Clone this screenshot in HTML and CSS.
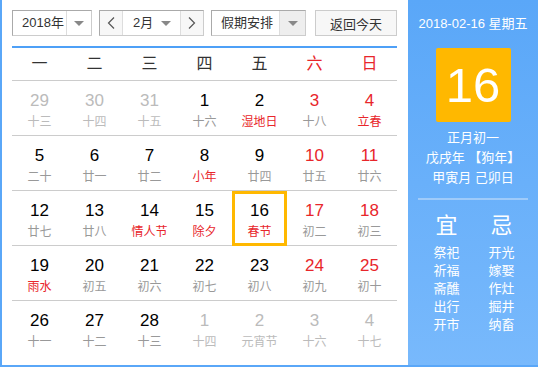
FILE: index.html
```html
<!DOCTYPE html>
<html>
<head>
    <title>万年历</title>
    <meta charset="UTF-8">
    <link rel="stylesheet" href="styles.css">
</head>
<body>

<div class="calendar">
    <div class="main">
        <div class="toolbar">
            <div class="select year-select">
                <span class="select-text">2018年</span>
                <span class="select-arrow"><i class="tri"></i></span>
            </div>
            <div class="month-group">
                <span class="nav-btn">
                    <svg width="8" height="12" viewBox="0 0 8 12"><polyline points="7,0.5 1.5,6 7,11.5" fill="none" stroke="#555" stroke-width="1.2"/></svg>
                </span>
                <div class="month-select">
                    <span class="select-text">2月</span>
                    <i class="tri"></i>
                </div>
                <span class="nav-btn">
                    <svg width="8" height="12" viewBox="0 0 8 12"><polyline points="1,0.5 6.5,6 1,11.5" fill="none" stroke="#555" stroke-width="1.2"/></svg>
                </span>
            </div>
            <div class="select holiday-select">
                <span class="select-text">假期安排</span>
                <span class="select-arrow grey"><i class="tri"></i></span>
            </div>
            <button class="today-btn">返回今天</button>
        </div>

        <div class="weekdays">
            <span>一</span><span>二</span><span>三</span><span>四</span><span>五</span>
            <span class="red">六</span><span class="red">日</span>
        </div>

        <div class="week">
            <div class="day other"><b>29</b><em>十三</em></div>
            <div class="day other"><b>30</b><em>十四</em></div>
            <div class="day other"><b>31</b><em>十五</em></div>
            <div class="day"><b>1</b><em>十六</em></div>
            <div class="day"><b>2</b><em class="fest">湿地日</em></div>
            <div class="day weekend"><b>3</b><em>十八</em></div>
            <div class="day weekend"><b>4</b><em class="fest">立春</em></div>
        </div>
        <div class="week">
            <div class="day"><b>5</b><em>二十</em></div>
            <div class="day"><b>6</b><em>廿一</em></div>
            <div class="day"><b>7</b><em>廿二</em></div>
            <div class="day"><b>8</b><em class="fest">小年</em></div>
            <div class="day"><b>9</b><em>廿四</em></div>
            <div class="day weekend"><b>10</b><em>廿五</em></div>
            <div class="day weekend"><b>11</b><em>廿六</em></div>
        </div>
        <div class="week">
            <div class="day"><b>12</b><em>廿七</em></div>
            <div class="day"><b>13</b><em>廿八</em></div>
            <div class="day"><b>14</b><em class="fest">情人节</em></div>
            <div class="day"><b>15</b><em class="fest">除夕</em></div>
            <div class="day today"><b>16</b><em class="fest">春节</em></div>
            <div class="day weekend"><b>17</b><em>初二</em></div>
            <div class="day weekend"><b>18</b><em>初三</em></div>
        </div>
        <div class="week">
            <div class="day"><b>19</b><em class="fest">雨水</em></div>
            <div class="day"><b>20</b><em>初五</em></div>
            <div class="day"><b>21</b><em>初六</em></div>
            <div class="day"><b>22</b><em>初七</em></div>
            <div class="day"><b>23</b><em>初八</em></div>
            <div class="day weekend"><b>24</b><em>初九</em></div>
            <div class="day weekend"><b>25</b><em>初十</em></div>
        </div>
        <div class="week last">
            <div class="day"><b>26</b><em>十一</em></div>
            <div class="day"><b>27</b><em>十二</em></div>
            <div class="day"><b>28</b><em>十三</em></div>
            <div class="day other"><b>1</b><em>十四</em></div>
            <div class="day other"><b>2</b><em>元宵节</em></div>
            <div class="day other"><b>3</b><em>十六</em></div>
            <div class="day other"><b>4</b><em>十七</em></div>
        </div>
    </div>

    <div class="side">
        <div class="side-date">2018-02-16 星期五</div>
        <div class="big-day">16</div>
        <div class="lunar">
            <p>正月初一</p>
            <p>戊戌年 【狗年】</p>
            <p>甲寅月 己卯日</p>
        </div>
        <div class="divider"></div>
        <div class="yiji">
            <div class="col">
                <h3>宜</h3>
                <p>祭祀</p><p>祈福</p><p>斋醮</p><p>出行</p><p>开市</p>
            </div>
            <div class="col">
                <h3>忌</h3>
                <p>开光</p><p>嫁娶</p><p>作灶</p><p>掘井</p><p>纳畜</p>
            </div>
        </div>
    </div>
</div>

</body>
</html>
```

FILE: styles.css
```css
body {
    margin: 0;
    font-family: "Liberation Sans", Arial, "Noto Sans CJK SC", sans-serif;
    background: #fff;
}

.calendar {
    display: flex;
    width: 536px;
    height: 365px;
    border-left: 2px solid #5aa7f8;
    border-bottom: 2px solid #5aa7f8;
}

.main {
    width: 385px;
    padding: 10px 11px 0 10px;
}

/* 顶部工具栏 */
.toolbar {
    display: flex;
    height: 26px;
    font-size: 13px;
    color: #333;
    padding-bottom: 10px;
    border-bottom: 2px solid #4ea0f7;
}

.select {
    display: flex;
    box-sizing: border-box;
    height: 26px;
    border: 1px solid #aaa;
    border-right-color: #ccc;
    border-bottom-color: #ccc;
    background: #fff;
}

.select-text {
    flex: 1;
    line-height: 24px;
    padding-left: 9px;
}

.select-arrow {
    width: 24px;
    border-left: 1px solid #ddd;
    display: flex;
    align-items: center;
    justify-content: center;
}

.select-arrow.grey {
    background: #eee;
}

.tri {
    width: 0;
    height: 0;
    border-left: 5px solid transparent;
    border-right: 5px solid transparent;
    border-top: 5px solid #888;
}

.year-select {
    width: 80px;
}

.month-group {
    display: flex;
    box-sizing: border-box;
    width: 105px;
    height: 26px;
    margin-left: 7px;
    border: 1px solid #aaa;
    border-right-color: #ccc;
    border-bottom-color: #ccc;
}

.nav-btn {
    width: 22px;
    display: flex;
    align-items: center;
    justify-content: center;
    background: #f7f7f7;
}

.month-select {
    display: flex;
    align-items: center;
    width: 59px;
    border-left: 1px solid #ddd;
    border-right: 1px solid #ddd;
    padding-right: 9px;
    box-sizing: border-box;
}

.month-select .select-text {
    padding-left: 10px;
}

.holiday-select {
    width: 95px;
    margin-left: 7px;
}

.holiday-select .select-arrow {
    width: 25px;
}

.today-btn {
    width: 82px;
    height: 26px;
    margin-left: 9px;
    border: 1px solid #ccc;
    background: #f7f7f7;
    font-family: inherit;
    font-size: 13px;
    color: #333;
    padding: 0;
}

/* 星期标题 */
.weekdays {
    display: flex;
    height: 32px;
    border-bottom: 1px solid #ccc;
}

.weekdays span {
    width: 55px;
    text-align: center;
    line-height: 32px;
    font-size: 16px;
    color: #333;
}

.weekdays .red {
    color: #e8262b;
}

/* 日期格子 */
.week {
    display: flex;
    height: 54px;
    border-bottom: 1px solid #ccc;
}

.week.last {
    border-bottom: none;
}

.day {
    position: relative;
    width: 55px;
    text-align: center;
    padding-top: 10px;
    box-sizing: border-box;
}

.day b {
    display: block;
    font-weight: normal;
    font-size: 17px;
    line-height: 20px;
    color: #000;
}

.day em {
    display: block;
    font-style: normal;
    font-size: 12px;
    line-height: 16px;
    margin-top: 3px;
    color: #999;
}

.day.weekend b,
.day em.fest {
    color: #e8262b;
}

.day.other b,
.day.other em {
    color: #bbb;
}

.day.today::after {
    content: "";
    position: absolute;
    left: 0;
    top: 0;
    right: 0;
    bottom: -1px;
    border: 3px solid #ffb800;
}

/* 右侧面板 */
.side {
    width: 130px;
    background: linear-gradient(#5aa7f8, #78b9fc);
    color: #fff;
    text-align: center;
    font-size: 13px;
}

.side-date {
    margin-top: 16px;
    line-height: 16px;
}

.big-day {
    width: 75px;
    height: 74px;
    margin: 16px auto 0;
    background: #ffb800;
    border-radius: 2px;
    font-size: 49px;
    line-height: 74px;
}

.lunar {
    margin-top: 6px;
}

.lunar p {
    margin: 0;
    line-height: 20px;
}

.divider {
    height: 2px;
    margin: 10px 10px 0;
    background: #9fcbfa;
}

.yiji {
    display: flex;
    padding: 0 9px 0 11px;
    margin-top: 14px;
}

.yiji .col {
    width: 55px;
}

.yiji h3 {
    margin: 0 0 6px;
    font-weight: normal;
    font-size: 22px;
    line-height: 24px;
}

.yiji p {
    margin: 0;
    line-height: 18px;
}
```
